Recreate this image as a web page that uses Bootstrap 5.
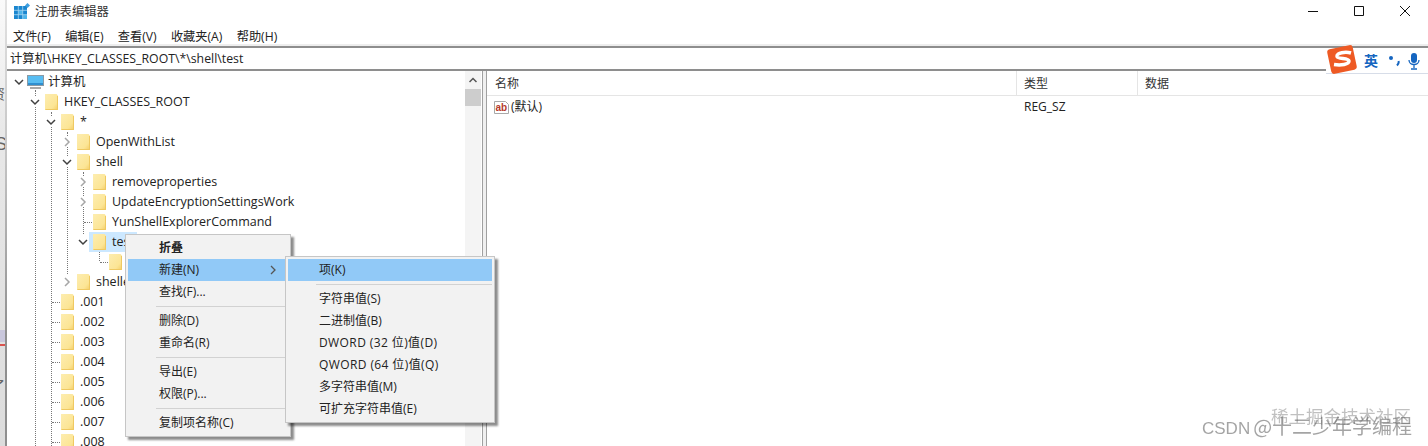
<!DOCTYPE html>
<html lang="zh-CN">

<head>
    <meta charset="UTF-8">
    <title>注册表编辑器</title>
    <link href="https://cdn.jsdelivr.net/npm/bootstrap@5.3.3/dist/css/bootstrap.min.css" rel="stylesheet">
    <script src="https://cdn.jsdelivr.net/npm/bootstrap@5.3.3/dist/js/bootstrap.bundle.min.js"></script>
    <style>
        html, body {
            height: 446px;
            overflow: hidden;
            background: #fff;
        }

        body {
            font-family: "Open Sans", "Noto Sans CJK SC", sans-serif;
            font-size: 12px;
            line-height: 20px;
            color: #222;
        }

        .reg-window {
            position: relative;
            height: 446px;
            margin-left: 5px;
            border-left: 2px solid #999;
            border-image: linear-gradient(#e2e2e2, #c4c4c4 35%, #8f8f8f 75%) 1;
            overflow: hidden;
        }

        /* title bar */
        .reg-title {
            height: 24px;
            padding-left: 7px;
            font-size: 12.3px;
            color: #333;
        }

        .reg-title svg.reg-logo { margin-right: 5px; margin-top: -2px; }

        .win-btns { margin-left: auto; align-self: flex-start; }

        .win-btn {
            width: 46px;
            height: 22px;
        }

        .reg-menu {
            height: 22px;
            padding: 3px 0 0 6px;
            gap: 14.3px;
            font-size: 12.2px;
        }

        .reg-addr {
            height: 25px;
            border-top: 2px solid #8e8e8e;
            border-bottom: 2px solid #8e8e8e;
            padding-left: 3px;
            font-size: 12.3px;
            line-height: 21px;
            box-shadow: 0 -2px 0 #eee;
        }

        .reg-body { height: 375px; }

        /* tree pane */
        .tree-pane {
            position: relative;
            width: 475px;
            padding-top: 1px;
            flex: none;
            overflow: hidden;
        }

        .tree-row {
            height: 20px;
            font-size: 12.5px;
            position: relative;
            z-index: 1;
        }

        .tree-arrow {
            width: 16px;
            flex: none;
            text-align: center;
            line-height: 0;
        }

        .tree-arrow svg { background: #fff; }

        .tree-stub {
            display: block;
            width: 8px;
            margin-left: 9px;
            border-top: 1px dotted #777;
        }

        .tree-fld { margin-left: 2px; flex: none; }
        .tree-text { margin-left: 6px; white-space: nowrap; }

        .tree-sel {
            background: #cce8ff;
            width: 48px;
            height: 20px;
            margin-left: -2px;
            padding-left: 2px;
        }

        .v-dots {
            position: absolute;
            width: 0;
            border-left: 1px dotted #777;
        }

        .tree-scroll {
            width: 16px;
            background: #f4f4f4;
            position: absolute;
            left: 458px;
            top: 0;
            bottom: 0;
            z-index: 1;
        }

        .tree-up {
            height: 18px;
            line-height: 0;
            text-align: center;
            padding-top: 6px;
        }

        .tree-thumb {
            height: 17px;
            background: #cdcdcd;
        }

        .pane-split {
            width: 5px;
            flex: none;
            background: #f0f0f0;
            border-left: 1px solid #a0a0a0;
            border-right: 1px solid #a0a0a0;
        }

        /* list pane */
        .list-head {
            height: 25px;
            border-bottom: 1px solid #e5e5e5;
            line-height: 26px;
            color: #333;
        }

        .list-head > div { padding-left: 7px; border-right: 1px solid #e5e5e5; height: 24px; }
        .list-head > .name-col { padding-left: 8px; }
        .name-col { width: 530px; flex: none; }
        .type-col { width: 121px; flex: none; }
        .list-row { height: 22px; line-height: 22px; }
        .list-row .name-col { padding-left: 7px; }
        .list-row .type-col { padding-left: 7px; }
        .list-row svg { margin-right: 1px; }

        /* context menus */
        .ctx-menu {
            position: absolute;
            z-index: 5;
            background: #f2f2f2;
            border: 1px solid #c6c6c6;
            box-shadow: 3px 3px 2px rgba(0, 0, 0, .45);
            padding: 2px;
        }

        .ctx-item {
            height: 22px;
            line-height: 22px;
            padding-left: 31px;
            position: relative;
            white-space: nowrap;
        }

        .ctx-wide { letter-spacing: .4px; }
        .ctx-on { background: #91c9f7; }
        .ctx-sep { height: 1px; background: #d2d2d2; margin: 3px 0 3px 28px; }
        .ctx-tri { position: absolute; right: 10px; top: 6px; }

        /* ime bar */
        .ime-bar {
            position: absolute;
            z-index: 6;
            left: 1326px;
            top: 48px;
            width: 102px;
            height: 26px;
            background: #fff;
            border-bottom: 1px solid #d7dde8;
        }

        .ime-bar svg { flex: none; }
        .ime-zh { color: #1565c0; font-weight: 700; font-size: 14px; margin-left: 6px; }

        .wm-a, .wm-b {
            position: absolute;
            z-index: 6;
            white-space: nowrap;
            filter: blur(.4px);
        }

        .wm-a { left: 1202px; top: 414px; font-size: 20px; line-height: 24px; color: rgba(90, 90, 90, .55); font-family: "Noto Sans CJK SC", sans-serif; }
        .wm-a span { font-size: 17px; font-family: "Liberation Sans", sans-serif; margin-right: 3px; }
        .wm-b { left: 1271px; top: 405px; font-size: 17.5px; line-height: 22px; color: rgba(140, 140, 140, .55); font-family: "Noto Sans CJK SC", sans-serif; }

        .left-bits {
            position: absolute;
            left: 0;
            top: 0;
            width: 5px;
            height: 446px;
            overflow: hidden;
            background: linear-gradient(#fafafa, #e8e8e8 30%, #dcdcdc);
            color: #666;
        }

        .left-bits span { position: absolute; white-space: nowrap; }
        .bit-zi { left: -9px; top: 84px; font-size: 14px; }
        .bit-s { left: -5px; top: 134px; font-size: 18px; font-family: "Liberation Sans", sans-serif; }
        .bit-le { left: -9px; top: 376px; font-size: 14px; }
        .bit-red { left: 0; top: 344px; width: 5px; height: 2px; background: #d9534f; }
        .bit-mauve { left: 0; top: 330px; width: 5px; height: 12px; background: #c9c7dc; }
    </style>
</head>

<body>
    <svg width="0" height="0" class="position-absolute">
        <defs>
            <linearGradient id="fldFill" x1="0" y1="0" x2="1" y2="1">
                <stop offset="0" stop-color="#fdedb0"/>
                <stop offset=".7" stop-color="#fce595"/>
                <stop offset="1" stop-color="#f4cc63"/>
            </linearGradient>
        </defs>
        <symbol id="fld" viewBox="0 0 13 16">
            <path d="M0 0h11.500l1.500 1.500V16H0z" fill="url(#fldFill)"/>
            <path d="M12.500 2v13.500H.5" fill="none" stroke="#efc962"/>
        </symbol>
        <symbol id="chev" viewBox="0 0 10 10">
            <path d="M1 3l4 4 4-4" fill="none" stroke="#404040" stroke-width="1.500"/>
        </symbol>
        <symbol id="arr" viewBox="0 0 10 10">
            <path d="M3 1l4 4-4 4" fill="none" stroke="#a6a6a6" stroke-width="1.500"/>
        </symbol>
    </svg>

    <div class="left-bits" aria-hidden="true">
        <span class="bit-zi">资</span>
        <span class="bit-s">S</span>
        <span class="bit-mauve"></span>
        <span class="bit-red"></span>
        <span class="bit-le">了</span>
    </div>

    <div class="reg-window">
        <!-- title -->
        <div class="reg-title d-flex align-items-center">
            <svg class="reg-logo" width="16" height="16" viewBox="0 0 16 16">
                <path d="M0 3h13v13H0z" fill="#1a86cf"/>
                <path d="M4.500 7.500h4v4h-4zM9 12h4v4H9z" fill="#4db4ea"/>
                <path d="M4.300 3v13M8.700 3v13M0 7.300h13M0 11.700h13" stroke="#a9d8f2" stroke-width=".8"/>
                <path d="M13.500 0l2.500 2.500-2.500 2.500L11 2.500z" fill="#3f9fdf"/>
            </svg>
            <span>注册表编辑器</span>
            <div class="win-btns d-flex">
                <div class="win-btn d-flex align-items-center justify-content-center">
                    <svg width="12" height="12"><path d="M1 6.500h10" stroke="#111"/></svg>
                </div>
                <div class="win-btn d-flex align-items-center justify-content-center">
                    <svg width="12" height="12"><path d="M1.500 1.500h9v9h-9z" fill="none" stroke="#111"/></svg>
                </div>
                <div class="win-btn d-flex align-items-center justify-content-center">
                    <svg width="12" height="12"><path d="M1 1l10 10M11 1L1 11" stroke="#111"/></svg>
                </div>
            </div>
        </div>

        <!-- menu -->
        <div class="reg-menu d-flex align-items-center">
            <span>文件(F)</span>
            <span>编辑(E)</span>
            <span>查看(V)</span>
            <span>收藏夹(A)</span>
            <span>帮助(H)</span>
        </div>

        <div class="reg-addr">计算机\HKEY_CLASSES_ROOT\*\shell\test</div>

        <div class="reg-body d-flex">
            <div class="tree-pane">
                <span class="v-dots" style="left:28px;top:19px;height:360px"></span>
                <span class="v-dots" style="left:44px;top:41px;height:340px"></span>
                <span class="v-dots" style="left:60px;top:61px;height:142px"></span>
                <span class="v-dots" style="left:76px;top:101px;height:62px"></span>
                <span class="v-dots" style="left:92px;top:171px;height:19px"></span>

                <div id="tree"></div>

                <div class="tree-scroll">
                    <div class="tree-up">
                        <svg width="8" height="6" viewBox="0 0 8 6"><path d="M.5 5L4 1.500 7.500 5" fill="none" stroke="#555" stroke-width="1.500"/></svg>
                    </div>
                    <div class="tree-thumb"></div>
                </div>
            </div>
            <div class="pane-split"></div>
            <div class="flex-grow-1">
                <div class="list-head d-flex">
                    <div class="name-col">名称</div>
                    <div class="type-col">类型</div>
                    <div class="flex-grow-1 border-0">数据</div>
                </div>
                <div class="list-row d-flex">
                    <div class="name-col d-flex align-items-center">
                        <svg width="16" height="16" viewBox="0 0 16 16">
                            <path d="M.5 2.500h11l3 3v9H.5z" fill="#fff" stroke="#a9a9a9"/>
                            <text x="1.500" y="11.500" font-size="10" font-weight="700" fill="#b5392c" font-family="Liberation Sans">ab</text>
                        </svg>
                        <span>(默认)</span>
                    </div>
                    <div class="type-col">REG_SZ</div>
                </div>
            </div>
        </div>

        <!-- main context menu -->
        <div class="ctx-menu" style="left:118px;top:234px;width:166px">
            <div class="ctx-item fw-bold">折叠</div>
            <div class="ctx-item ctx-on">新建(N)
                <svg class="ctx-tri" width="10" height="10" viewBox="0 0 10 10"><path d="M3 1l4 4-4 4" fill="none" stroke="#555" stroke-width="1.300"/></svg>
            </div>
            <div class="ctx-item">查找(F)...</div>
            <div class="ctx-sep"></div>
            <div class="ctx-item">删除(D)</div>
            <div class="ctx-item">重命名(R)</div>
            <div class="ctx-sep"></div>
            <div class="ctx-item">导出(E)</div>
            <div class="ctx-item">权限(P)...</div>
            <div class="ctx-sep"></div>
            <div class="ctx-item">复制项名称(C)</div>
        </div>

        <!-- sub menu -->
        <div class="ctx-menu" style="left:278px;top:256px;width:210px">
            <div class="ctx-item ctx-on">项(K)</div>
            <div class="ctx-sep"></div>
            <div class="ctx-item">字符串值(S)</div>
            <div class="ctx-item">二进制值(B)</div>
            <div class="ctx-item ctx-wide">DWORD (32 位)值(D)</div>
            <div class="ctx-item ctx-wide">QWORD (64 位)值(Q)</div>
            <div class="ctx-item">多字符串值(M)</div>
            <div class="ctx-item">可扩充字符串值(E)</div>
        </div>
    </div>

    <!-- sogou ime bar -->
    <div class="ime-bar d-flex align-items-center">
        <svg width="32" height="31" viewBox="0 0 32 31" style="margin-top:-3px">
            <rect x="3" y="3" width="26" height="25" rx="3" fill="#ee5a24" transform="rotate(-12 16 15.500)"/>
            <path d="M25 9c-5-1.500-15-.5-14 3.500 1 3 11.500 1 12 4.500 0 3.500-8 4.500-15 3.500" fill="none" stroke="#fff" stroke-width="3.500"/>
        </svg>
        <span class="ime-zh">英</span>
        <svg style="margin-left:6px" width="16" height="16" viewBox="0 0 16 16">
            <circle cx="7" cy="5" r="2" fill="#1565c0"/>
            <path d="M14.500 8c.5 1.500 0 3-1.500 4.500" fill="none" stroke="#1565c0" stroke-width="2"/>
        </svg>
        <svg style="margin-left:7px" width="14" height="18" viewBox="0 0 14 18">
            <rect x="4" y="1" width="6" height="10" rx="3" fill="#1565c0"/>
            <path d="M2 8c0 6 10 6 10 0M7 13v3M4 17h6" fill="none" stroke="#1565c0" stroke-width="1.300"/>
        </svg>
    </div>

    <div class="wm-b">稀土掘金技术社区</div>
    <div class="wm-a"><span>CSDN</span>@十二少年学编程</div>

    <script>
        // [level, arrow, text]  arrow: d = open, r = closed, '' = leaf
        var rows = [
            [1, 'd', 'HKEY_CLASSES_ROOT'],
            [2, 'd', '*'],
            [3, 'r', 'OpenWithList'],
            [3, 'd', 'shell'],
            [4, 'r', 'removeproperties'],
            [4, 'r', 'UpdateEncryptionSettingsWork'],
            [4, '', 'YunShellExplorerCommand'],
            [4, 'd', 'test', 1],
            [5, '', 'New'],
            [3, 'r', 'shellex'],
            [2, '', '.001'], [2, '', '.002'], [2, '', '.003'], [2, '', '.004'],
            [2, '', '.005'], [2, '', '.006'], [2, '', '.007'], [2, '', '.008']
        ];
        var html = '<div class="tree-row d-flex align-items-center" style="padding-left:4px">' +
            '<span class="tree-arrow"><svg width="10" height="10"><use href="#chev"/></svg></span>' +
            '<svg width="17" height="16" viewBox="0 0 17 16" class="flex-none">' +
            '<rect x=".5" y="1.500" width="16" height="10" fill="#58bdf2" stroke="#8a9aa5"/>' +
            '<path d="M1 9h15v2H1z" fill="#2f8fd0"/><path d="M3 14h11" stroke="#a8a8a8" stroke-width="2"/></svg>' +
            '<span class="tree-text" style="margin-left:4px">计算机</span></div>';
        rows.forEach(function (r) {
            var arrow = r[1] == 'd' ? '<svg width="10" height="10"><use href="#chev"/></svg>'
                : r[1] == 'r' ? '<svg width="10" height="10"><use href="#arr"/></svg>' : '<i class="tree-stub"></i>';
            var fld = '<svg class="tree-fld" width="13" height="16"><use href="#fld"/></svg>';
            html += '<div class="tree-row d-flex align-items-center" style="padding-left:' + (4 + 16 * r[0]) + 'px">' +
                '<span class="tree-arrow">' + arrow + '</span>' +
                (r[3] ? '<span class="d-flex align-items-center tree-sel">' + fld + '<span class="tree-text">' + r[2] + '</span></span>' : fld + '<span class="tree-text">' + r[2] + '</span>') +
                '</div>';
        });
        document.getElementById('tree').innerHTML = html;
    </script>
</body>

</html>
